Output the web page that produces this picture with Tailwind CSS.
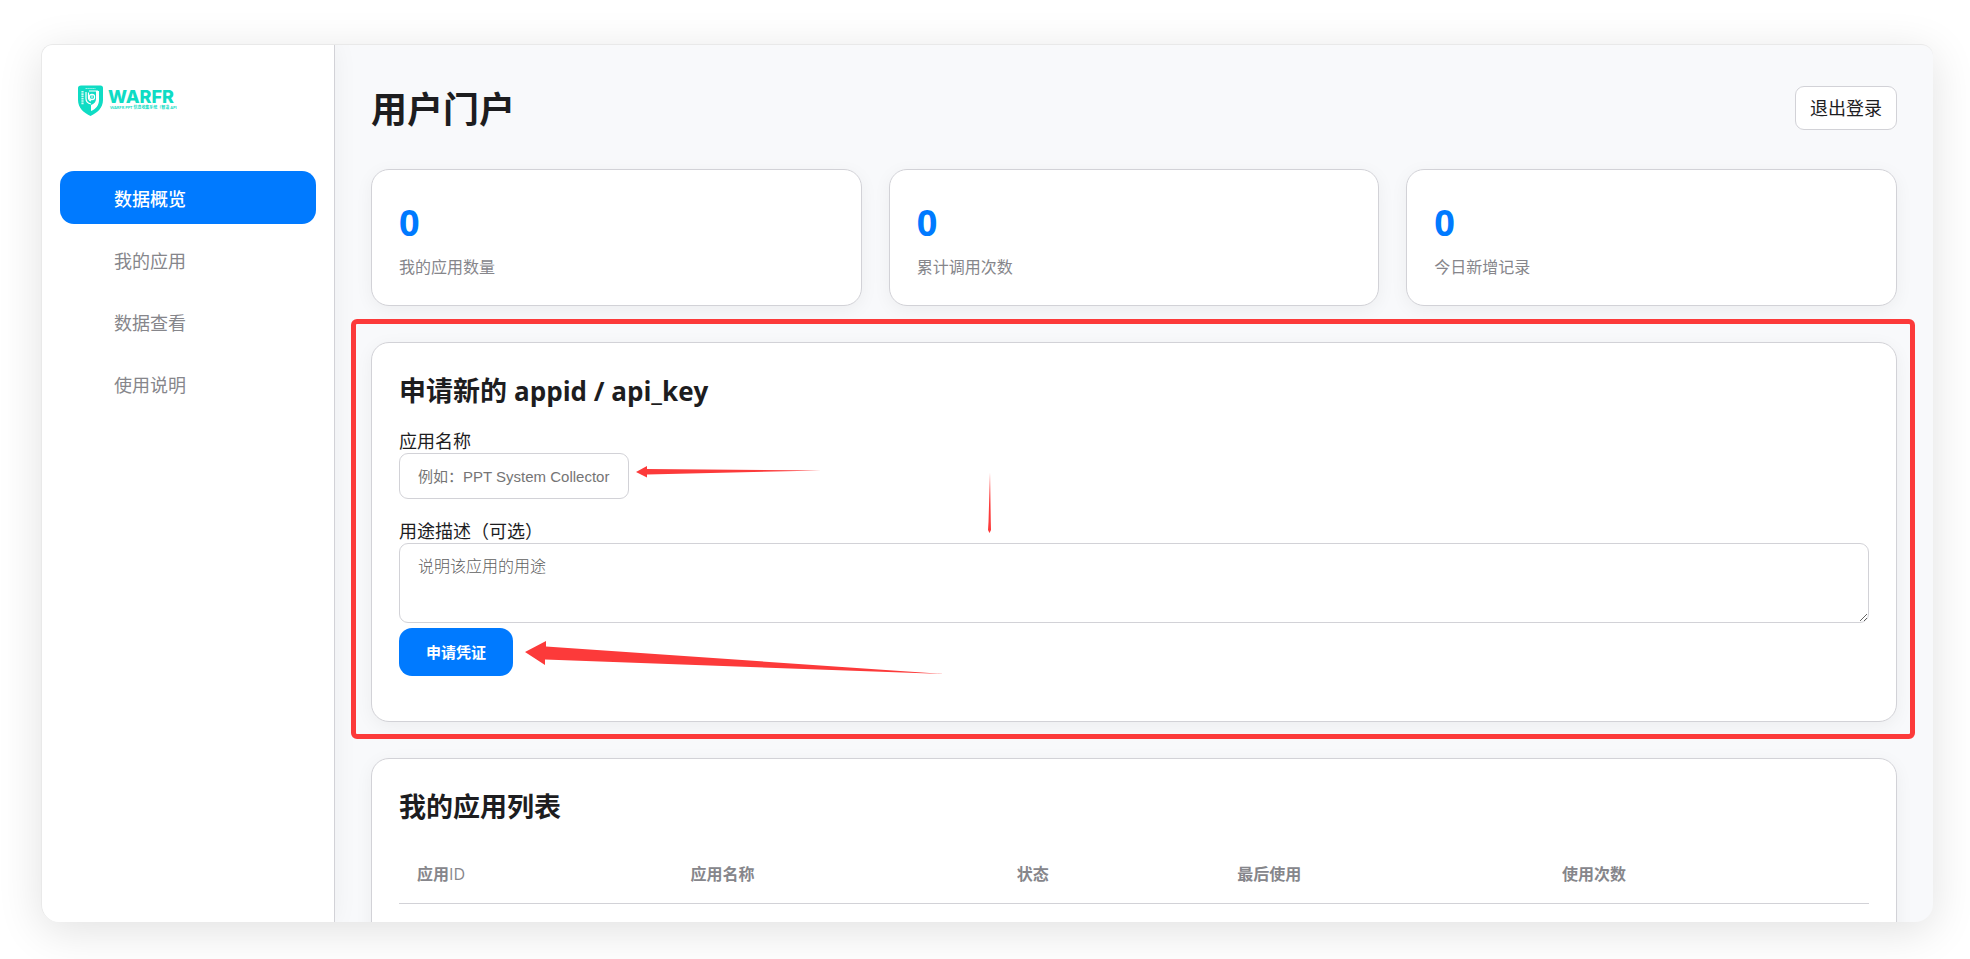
<!DOCTYPE html>
<html lang="zh-CN">
<head>
  <meta charset="UTF-8" />
  <meta name="viewport" content="width=device-width, initial-scale=1.0" />
  <title>用户门户</title>
  <script src="https://cdn.jsdelivr.net/npm/@tailwindcss/browser@4"></script>
</head>
<body class="h-screen overflow-hidden bg-white pt-11 pr-[37px] pb-[37px] pl-[41px] font-['Open_Sans','Noto_Sans_CJK_SC',sans-serif] text-lg text-[#1d1d1f]">
  <div class="flex h-full overflow-hidden rounded-t-xl rounded-b-[18px] border-t border-l border-[#e9e9e9] bg-[#f8f9fb] shadow-[0_9px_45px_rgba(0,0,0,0.12)]">

    <!-- 侧边栏 -->
    <aside class="relative z-10 w-[293px] shrink-0 border-r border-[#d2d2d7] bg-white px-[18px] shadow-[0_0_24px_rgba(0,0,0,0.05)]">
      <a href="#" class="mt-10 ml-[18px] block" aria-label="WARFR">
        <svg class="h-8 w-[104px]" viewBox="0 0 104 32" fill="#0fdcc4">
          <path d="M2 0.5h20.500q2.500 0 2.500 2.500v12c0 8-6 13-12.500 16C6 28 0 23 0 15V3Q0 .5 3 .5z" />
          <path d="M7.500 3.500h10" stroke="#fff" stroke-width="1" stroke-dasharray="1.500 .4" opacity=".6" />
          <path d="M4.500 6v14" stroke="#fff" stroke-width="2.200" stroke-dasharray="1.600 .7" opacity=".8" />
          <path d="M13 26V20c3-1 5-3 5-6V6h3v9c0 5-3 9-8 11z" fill="#fff" />
          <path d="M8 7v6.500c0 3 2 5 5 5.500M10.500 7.500v5c0 2 1 3 2.500 3.500M11 6h9" fill="none" stroke="#fff" stroke-width="1.200" />
          <circle cx="14" cy="12" r="2.600" fill="#0fdcc4" stroke="#fff" stroke-width="1.200" />
          <path d="M14 9.500v4" stroke="#fff" stroke-width="1" />
          <text x="30" y="18" font-size="18" font-weight="800" font-family="Inter, sans-serif">WARFR</text>
          <text x="32" y="24" font-size="4" font-weight="700" font-family="Lato, 'Noto Sans CJK SC', sans-serif">WARFR PPT 信息收集系统（智造 API</text>
        </svg>
      </a>
      <nav class="mt-[54px] flex flex-col gap-[9px] text-[#86868b]">
        <a href="#" class="rounded-[14px] bg-[#007aff] pt-[15px] pb-[11px] pl-[54px] leading-[27px] font-medium text-white">数据概览</a>
        <a href="#" class="rounded-[14px] pt-[15px] pb-[11px] pl-[54px] leading-[27px]">我的应用</a>
        <a href="#" class="rounded-[14px] pt-[15px] pb-[11px] pl-[54px] leading-[27px]">数据查看</a>
        <a href="#" class="rounded-[14px] pt-[15px] pb-[11px] pl-[54px] leading-[27px]">使用说明</a>
      </nav>
    </aside>

    <!-- 主内容 -->
    <main class="min-w-0 flex-1 overflow-hidden px-9 pt-10">
      <header class="mb-[39px] flex items-center justify-between">
        <h1 class="pt-1 text-4xl leading-[41px] font-bold">用户门户</h1>
        <button type="button" class="h-11 rounded-[9px] border border-[#d2d2d7] bg-white px-[14px]">退出登录</button>
      </header>

      <section class="mb-9 grid grid-cols-3 gap-[27px]">
        <div class="rounded-[18px] border border-[#d2d2d7] bg-white px-[27px] pt-7 pb-[26px] shadow-[0_4px_18px_rgba(0,0,0,0.05)]">
          <div class="mb-2 text-4xl leading-[50px] font-bold text-[#007aff]">0</div>
          <div class="text-base leading-[23px] text-[#86868b]">我的应用数量</div>
        </div>
        <div class="rounded-[18px] border border-[#d2d2d7] bg-white px-[27px] pt-7 pb-[26px] shadow-[0_4px_18px_rgba(0,0,0,0.05)]">
          <div class="mb-2 text-4xl leading-[50px] font-bold text-[#007aff]">0</div>
          <div class="text-base leading-[23px] text-[#86868b]">累计调用次数</div>
        </div>
        <div class="rounded-[18px] border border-[#d2d2d7] bg-white px-[27px] pt-7 pb-[26px] shadow-[0_4px_18px_rgba(0,0,0,0.05)]">
          <div class="mb-2 text-4xl leading-[50px] font-bold text-[#007aff]">0</div>
          <div class="text-base leading-[23px] text-[#86868b]">今日新增记录</div>
        </div>
      </section>

      <!-- 申请表单 -->
      <section class="relative mb-9 rounded-[18px] border border-[#d2d2d7] bg-white px-[27px] pt-7 pb-[45px] shadow-[0_4px_18px_rgba(0,0,0,0.05)]">
        <h2 class="mb-[17px] text-[27px] leading-10 font-bold">申请新的 <span class="text-[26px]">appid / api_key</span></h2>
        <form>
          <div class="mb-[19px]">
            <label for="appName" class="block pt-0.5 leading-[23px]">应用名称</label>
            <input id="appName" type="text" placeholder="例如：PPT System Collector" class="block h-[46px] w-[230px] rounded-[9px] border border-[#d2d2d7] bg-white px-[18px] font-['Liberation_Sans','Noto_Sans_CJK_SC',sans-serif] text-[15px] placeholder:text-[#757575]" />
          </div>
          <label for="appDesc" class="block pt-0.5 leading-[23px]">用途描述（可选）</label>
          <textarea id="appDesc" placeholder="说明该应用的用途" class="mb-[5px] block h-20 w-full resize rounded-[9px] border border-[#d2d2d7] bg-white px-[18px] py-[9px] font-['Noto_Sans_CJK_SC',sans-serif] text-base font-light placeholder:text-[#606060]"></textarea>
          <button type="submit" class="h-12 rounded-[13px] bg-[#007aff] px-[27px] pt-0.5 text-[15px] font-bold text-white">申请凭证</button>
        </form>

        <!-- 标注框和箭头 -->
        <div class="pointer-events-none absolute -top-6 -right-[19px] -bottom-[18px] -left-[21px] rounded-md border-5 border-[#fc3a3a]"></div>
        <svg class="pointer-events-none absolute top-0 left-0 h-[360px] w-[640px]" viewBox="0 0 640 360" fill="#fc3a3a">
          <path d="M264 129l11-6v3l174 1.500-174 4v3z" />
          <path d="M617.500 190l-1.500-3 .5-8 1.500-49.500.8 49.500.2 8z" />
          <path d="M153 309l21-11v5.500L572 331l-399-14.500v5.500z" />
        </svg>
      </section>

      <!-- 应用列表 -->
      <section class="rounded-[18px] border border-[#d2d2d7] bg-white px-[27px] pt-7 pb-[27px] shadow-[0_4px_18px_rgba(0,0,0,0.05)]">
        <h2 class="mb-[17px] text-[27px] leading-10 font-bold">我的应用列表</h2>
        <table class="w-full table-fixed text-left text-base text-[#86868b]">
          <thead>
            <tr class="h-[59px] border-b border-[#d2d2d7]">
              <th class="w-[18.6%] pt-0.5 pl-[18px]">应用<span class="font-medium">ID</span></th>
              <th class="w-[22.2%] pt-0.5 pl-[18px]">应用名称</th>
              <th class="w-[15%] pt-0.5 pl-[18px]">状态</th>
              <th class="w-[22.1%] pt-0.5 pl-[18px]">最后使用</th>
              <th class="w-[22.1%] pt-0.5 pl-[18px]">使用次数</th>
            </tr>
          </thead>
          <tbody>
            <tr class="h-[60px]"><td colspan="5"></td></tr>
          </tbody>
        </table>
      </section>
    </main>
  </div>
</body>
</html>
